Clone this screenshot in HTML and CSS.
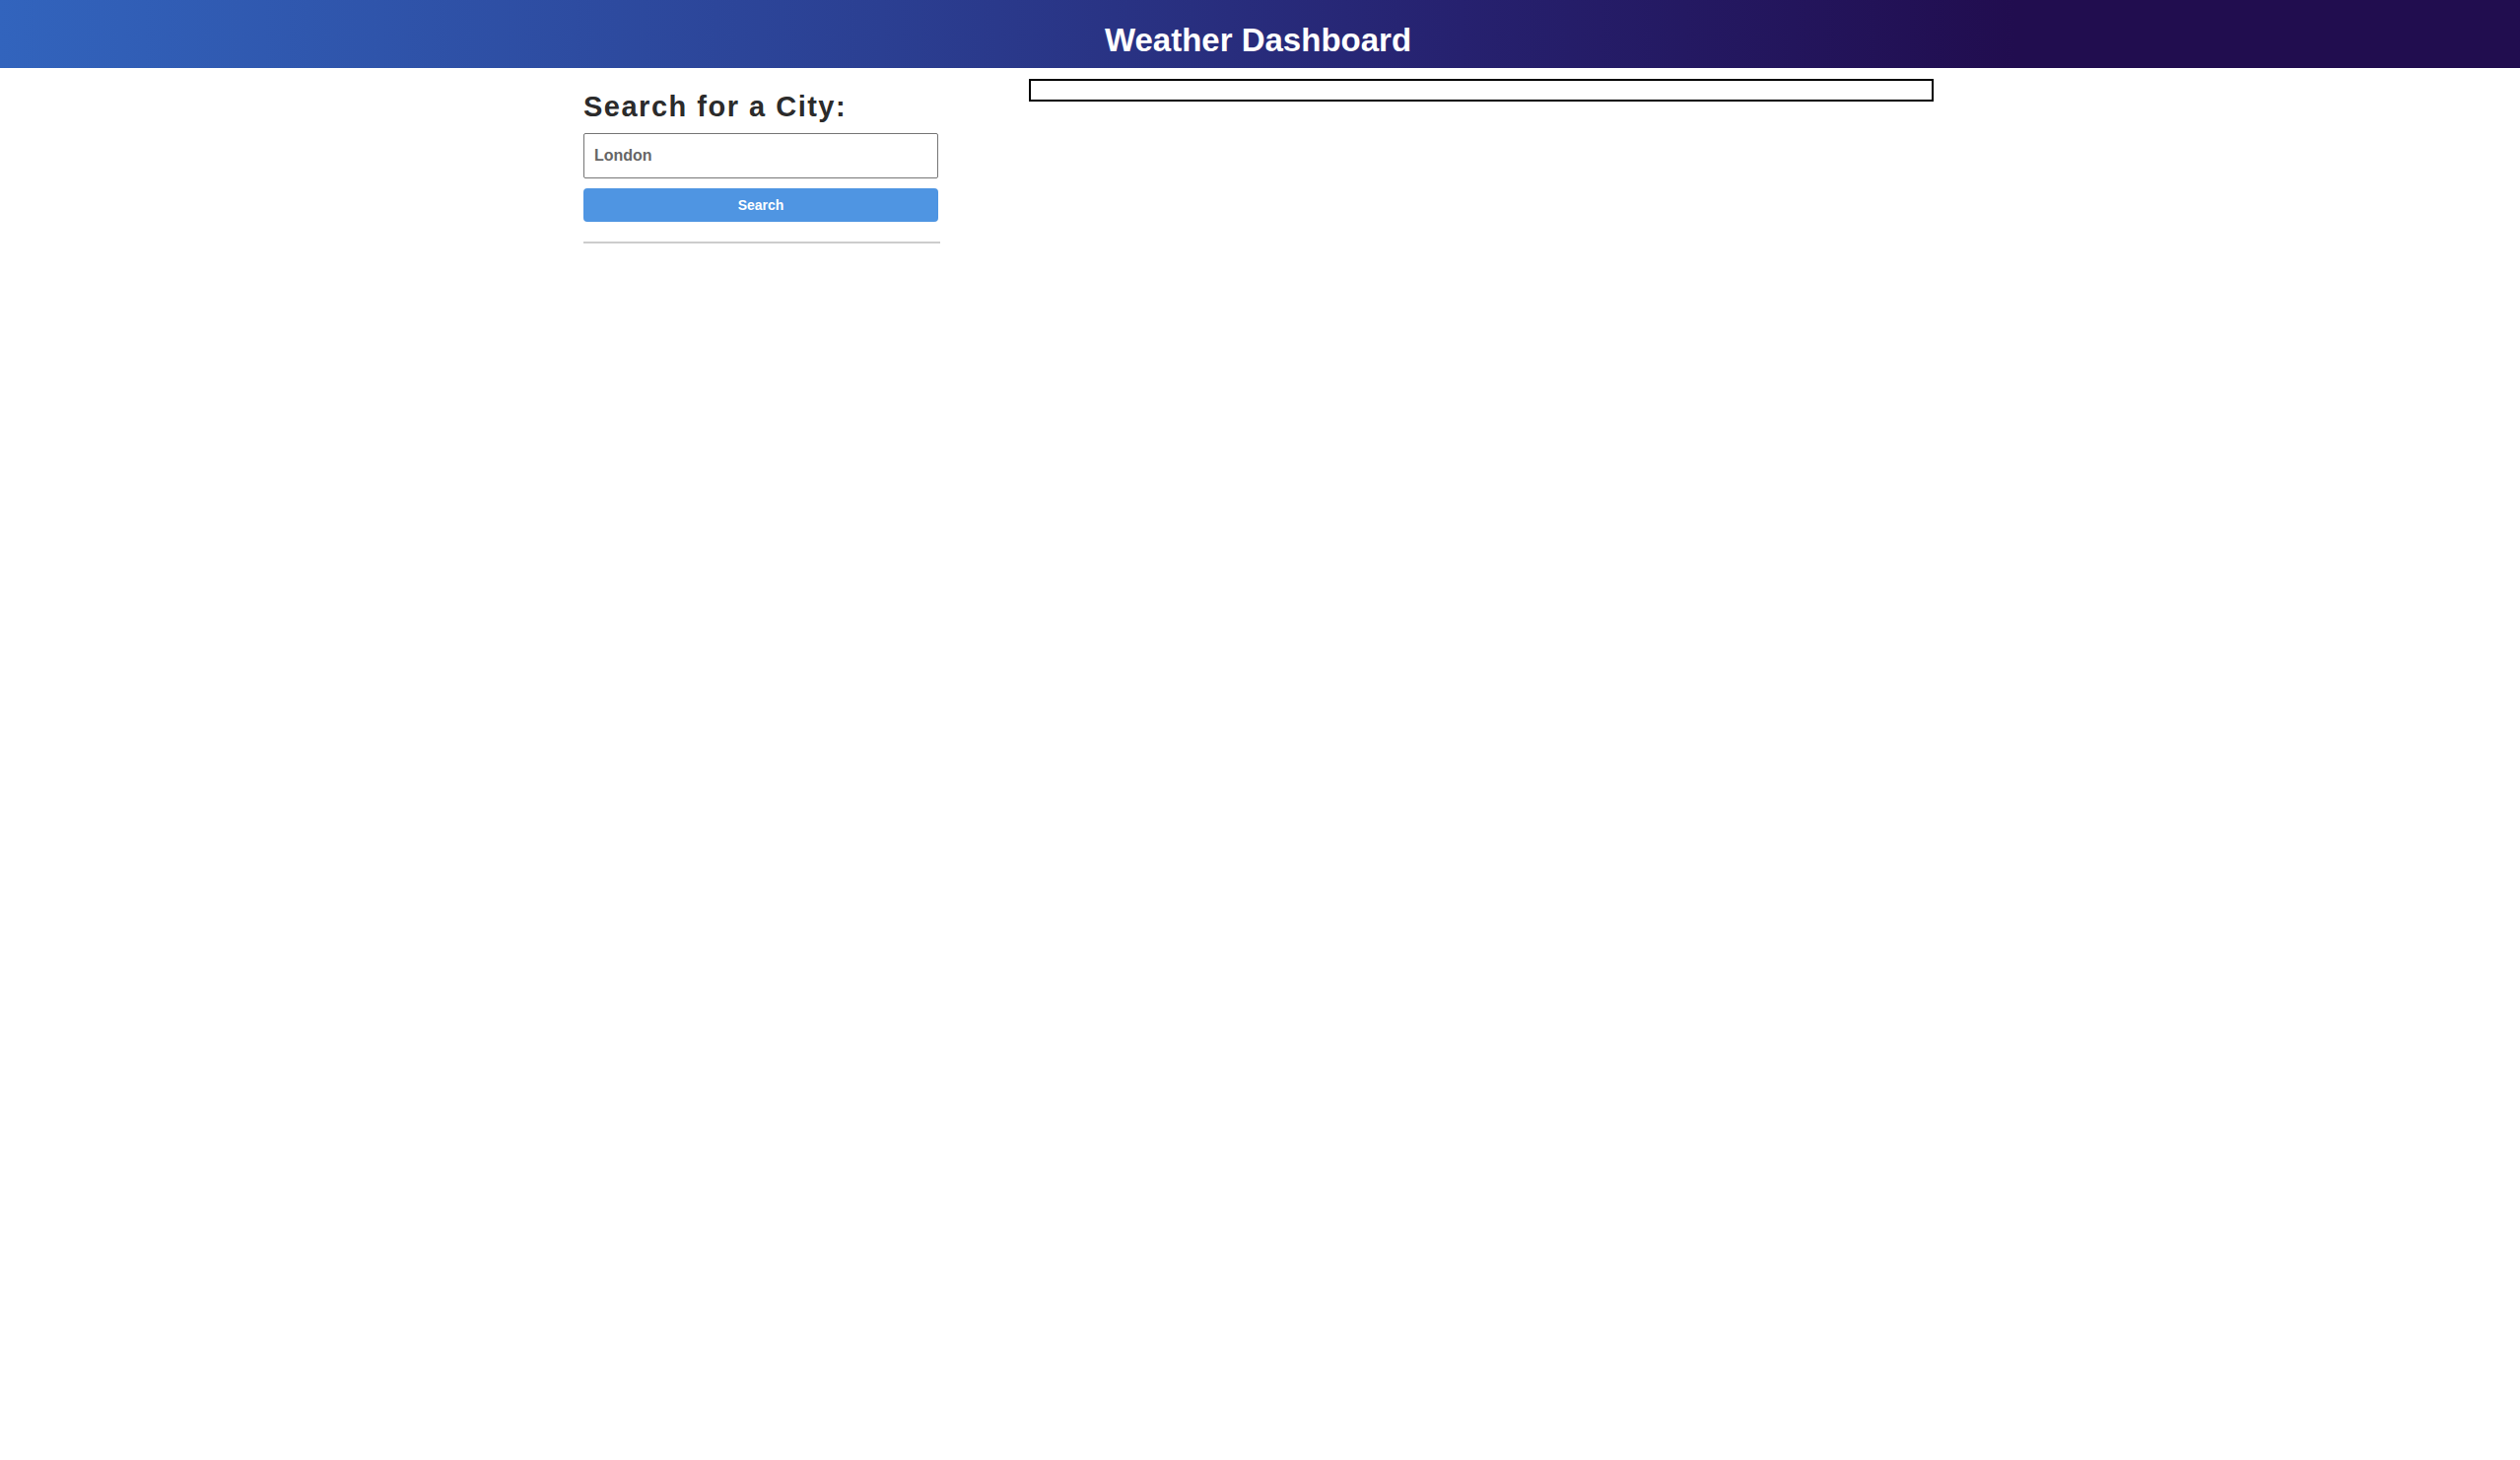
FILE: index.html
```html
<!DOCTYPE html>
<html lang="en">
<head>
<meta charset="utf-8">
<title>Weather Dashboard</title>
<link rel="stylesheet" href="styles.css">
</head>
<body>
<header class="site-header">
  <h1 class="site-title">Weather Dashboard</h1>
</header>
<main class="layout">
  <aside class="search-panel">
    <h2 class="search-heading">Search for a City:</h2>
    <input class="city-input" type="text" value="London">
    <button class="search-btn" type="button">Search</button>
    <hr class="divider">
  </aside>
  <section class="results">
    <div class="current-weather"></div>
  </section>
</main>
</body>
</html>
```
FILE: styles.css
```css
html, body {
  margin: 0;
  padding: 0;
  background: #ffffff;
  font-family: "Liberation Sans", Arial, sans-serif;
}

.site-header {
  box-sizing: border-box;
  height: 69px;
  padding-top: 22px;
  padding-right: 4px;
  background: linear-gradient(to right, #3264bd 0%, #2b3f92 35%, #26216f 58%, #210d4f 80%, #210d4f 100%);
  text-align: center;
}

.site-title {
  margin: 0;
  color: #ffffff;
  font-size: 33px;
  font-weight: 700;
  line-height: normal;
}

.layout {
  display: flex;
  justify-content: center;
  gap: 90px;
  padding-top: 11px;
  padding-right: 3px;
}

.search-panel {
  width: 362px;
  display: flex;
  flex-direction: column;
  align-items: flex-start;
}

.search-heading {
  margin: 12px 0 10px 0;
  font-size: 29px;
  font-weight: 700;
  letter-spacing: 1.5px;
  color: #2b2b2b;
  line-height: normal;
}

.city-input {
  box-sizing: border-box;
  width: 360px;
  height: 46px;
  margin: 0;
  padding: 0 10px;
  border: 1px solid #767676;
  border-radius: 2px;
  font-family: "Liberation Sans", Arial, sans-serif;
  font-size: 16px;
  font-weight: 700;
  color: #666666;
  background: #ffffff;
}

.search-btn {
  box-sizing: border-box;
  width: 360px;
  height: 34px;
  margin: 10px 0 0 0;
  border: none;
  border-radius: 4px;
  background: #4f95e2;
  color: #ffffff;
  font-family: "Liberation Sans", Arial, sans-serif;
  font-size: 14px;
  font-weight: 700;
}

.divider {
  width: 362px;
  margin: 20px 0 0 0;
  border: none;
  border-top: 2px solid #cccccc;
  height: 0;
}

.results {
  width: 918px;
}

.current-weather {
  box-sizing: border-box;
  height: 23px;
  margin-top: 0;
  border: 2px solid #000000;
}
```
